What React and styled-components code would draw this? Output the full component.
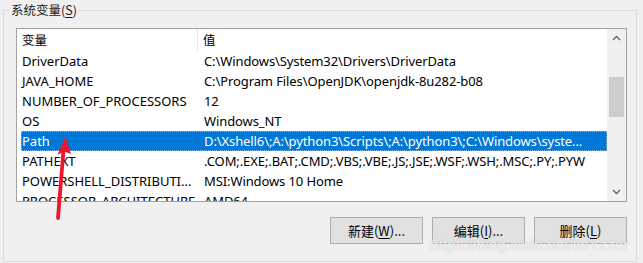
import React from 'react';
import styled, {createGlobalStyle} from 'styled-components';

const GlobalStyle = createGlobalStyle`
  html, body {
    margin: 0;
    padding: 0;
    background: #f0f0f0;
  }
  body {
    font-family: "Noto Sans", "Noto Sans CJK SC", sans-serif;
    font-size: 13px;
    color: #000;
  }
`;

const Page = styled.div`
  position: relative;
  width: 643px;
  height: 263px;
  overflow: hidden;
  background: #f0f0f0;
`;

const Frame = styled.fieldset`
  box-sizing: border-box;
  margin: 0 6px 0 3px;
  padding: 0 9px 0 12px;
  height: 262px;
  border: 1px solid #dcdcdc;
  min-width: 0;
`;

const Legend = styled.legend`
  margin-left: -6px;
  padding: 0 1px;
  font-family: "Noto Sans CJK SC", sans-serif;
  font-size: 12.5px;
  line-height: 20px;
  color: #1a1a1a;

  u {
    text-decoration-thickness: 1px;
    text-underline-offset: 2px;
  }
`;

const ListBox = styled.div`
  display: flex;
  height: 174px;
  margin-top: 8px;
  border: 1px solid #a2a2a2;
  background: #fff;
  box-sizing: border-box;
`;

const ListBody = styled.div`
  flex: 1;
  overflow: hidden;
  min-width: 0;
`;

const Header = styled.div`
  display: grid;
  grid-template-columns: 181px 1fr;
  height: 22px;
  font-family: "Noto Sans CJK SC", sans-serif;
  font-size: 12.5px;
  line-height: 22px;
`;

const HeaderCell = styled.div`
  padding-left: 5px;
  border-right: ${({$last}) => ($last ? 'none' : '1px solid #e5e5e5')};
`;

const Row = styled.div`
  display: grid;
  grid-template-columns: 178px 1fr;
  margin-left: 4px;
  height: 20px;
  line-height: 20px;
  box-sizing: border-box;
  white-space: nowrap;
  background: ${({$selected}) => ($selected ? '#0078d7' : 'transparent')};
  color: ${({$selected}) => ($selected ? '#fff' : '#000')};
  outline: ${({$selected}) => ($selected ? '1px dotted #7fb8ea' : 'none')};
  outline-offset: -1px;
`;

const Cell = styled.div`
  padding-left: ${({$value}) => ($value ? '5px' : '1px')};
  overflow: hidden;
  letter-spacing: ${({$value}) => ($value ? '-0.1px' : '0')};
`;

const ScrollBar = styled.div`
  display: flex;
  flex-direction: column;
  width: 19px;
  background: #f0f0f0;
`;

const ArrowBox = styled.div`
  height: 18px;
  display: flex;
  align-items: center;
  justify-content: center;
  color: #606060;
`;

const Track = styled.div`
  flex: 1;
  padding: 30px 2px 0 2px;
`;

const Thumb = styled.div`
  height: 40px;
  background: #cdcdcd;
`;

const ButtonRow = styled.div`
  display: flex;
  justify-content: flex-end;
  gap: 9px;
  margin-top: 15px;
`;

const Button = styled.button`
  width: 93px;
  height: 27px;
  border: 1px solid #adadad;
  background: #e1e1e1;
  font-family: "Noto Sans CJK SC", sans-serif;
  font-size: 13px;
  color: #000;
  padding: 0;

  u {
    text-decoration-thickness: 1px;
    text-underline-offset: 2px;
  }
`;

const Watermark = styled.div`
  position: absolute;
  left: 430px;
  top: 236px;
  font-family: "Liberation Sans", Arial, sans-serif;
  font-size: 15px;
  letter-spacing: 0.2px;
  color: rgba(255, 255, 255, 0.85);
  text-shadow: 0 0 1px rgba(120, 120, 120, 0.6);
`;

const Annotation = styled.svg`
  position: absolute;
  left: 0;
  top: 0;
  pointer-events: none;
`;

const rows = [
  ['DriverData', 'C:\\Windows\\System32\\Drivers\\DriverData'],
  ['JAVA_HOME', 'C:\\Program Files\\OpenJDK\\openjdk-8u282-b08'],
  ['NUMBER_OF_PROCESSORS', '12'],
  ['OS', 'Windows_NT'],
  ['Path', 'D:\\Xshell6\\;A:\\python3\\Scripts\\;A:\\python3\\;C:\\Windows\\syste...'],
  ['PATHEXT', '.COM;.EXE;.BAT;.CMD;.VBS;.VBE;.JS;.JSE;.WSF;.WSH;.MSC;.PY;.PYW'],
  ['POWERSHELL_DISTRIBUTI...', 'MSI:Windows 10 Home'],
  ['PROCESSOR_ARCHITECTURE', 'AMD64'],
];

const Chevron = ({up}) => (
  <svg width="9" height="6" viewBox="0 0 9 6">
    <path
      d={up ? 'M1 5 L4.5 1.5 L8 5' : 'M1 1 L4.5 4.5 L8 1'}
      fill="none"
      stroke="currentColor"
      strokeWidth="1.3"
    />
  </svg>
);

const App = () => {
  return (
    <Page>
      <GlobalStyle />
      <Frame>
        <Legend>系统变量(<u>S</u>)</Legend>
        <ListBox>
          <ListBody>
            <Header>
              <HeaderCell>变量</HeaderCell>
              <HeaderCell $last>值</HeaderCell>
            </Header>
            {rows.map (([name, value]) => (
              <Row key={name} $selected={name === 'Path'}>
                <Cell>{name}</Cell>
                <Cell $value>{value}</Cell>
              </Row>
            ))}
          </ListBody>
          <ScrollBar>
            <ArrowBox><Chevron up /></ArrowBox>
            <Track><Thumb /></Track>
            <ArrowBox><Chevron /></ArrowBox>
          </ScrollBar>
        </ListBox>
        <ButtonRow>
          <Button>新建(<u>W</u>)...</Button>
          <Button>编辑(<u>I</u>)...</Button>
          <Button>删除(<u>L</u>)</Button>
        </ButtonRow>
      </Frame>
      <Watermark>https://blog.csdn.net/lmYzzer</Watermark>
      <Annotation width="643" height="263" viewBox="0 0 643 263">
        <line
          x1="58"
          y1="218"
          x2="63.5"
          y2="150"
          stroke="#e8192c"
          strokeWidth="3.8"
          strokeLinecap="round"
        />
        <path d="M65.5 136.5 L57.5 155 L64 151.5 L71 154 Z" fill="#e8192c" />
      </Annotation>
    </Page>
  );
};

export default App;
